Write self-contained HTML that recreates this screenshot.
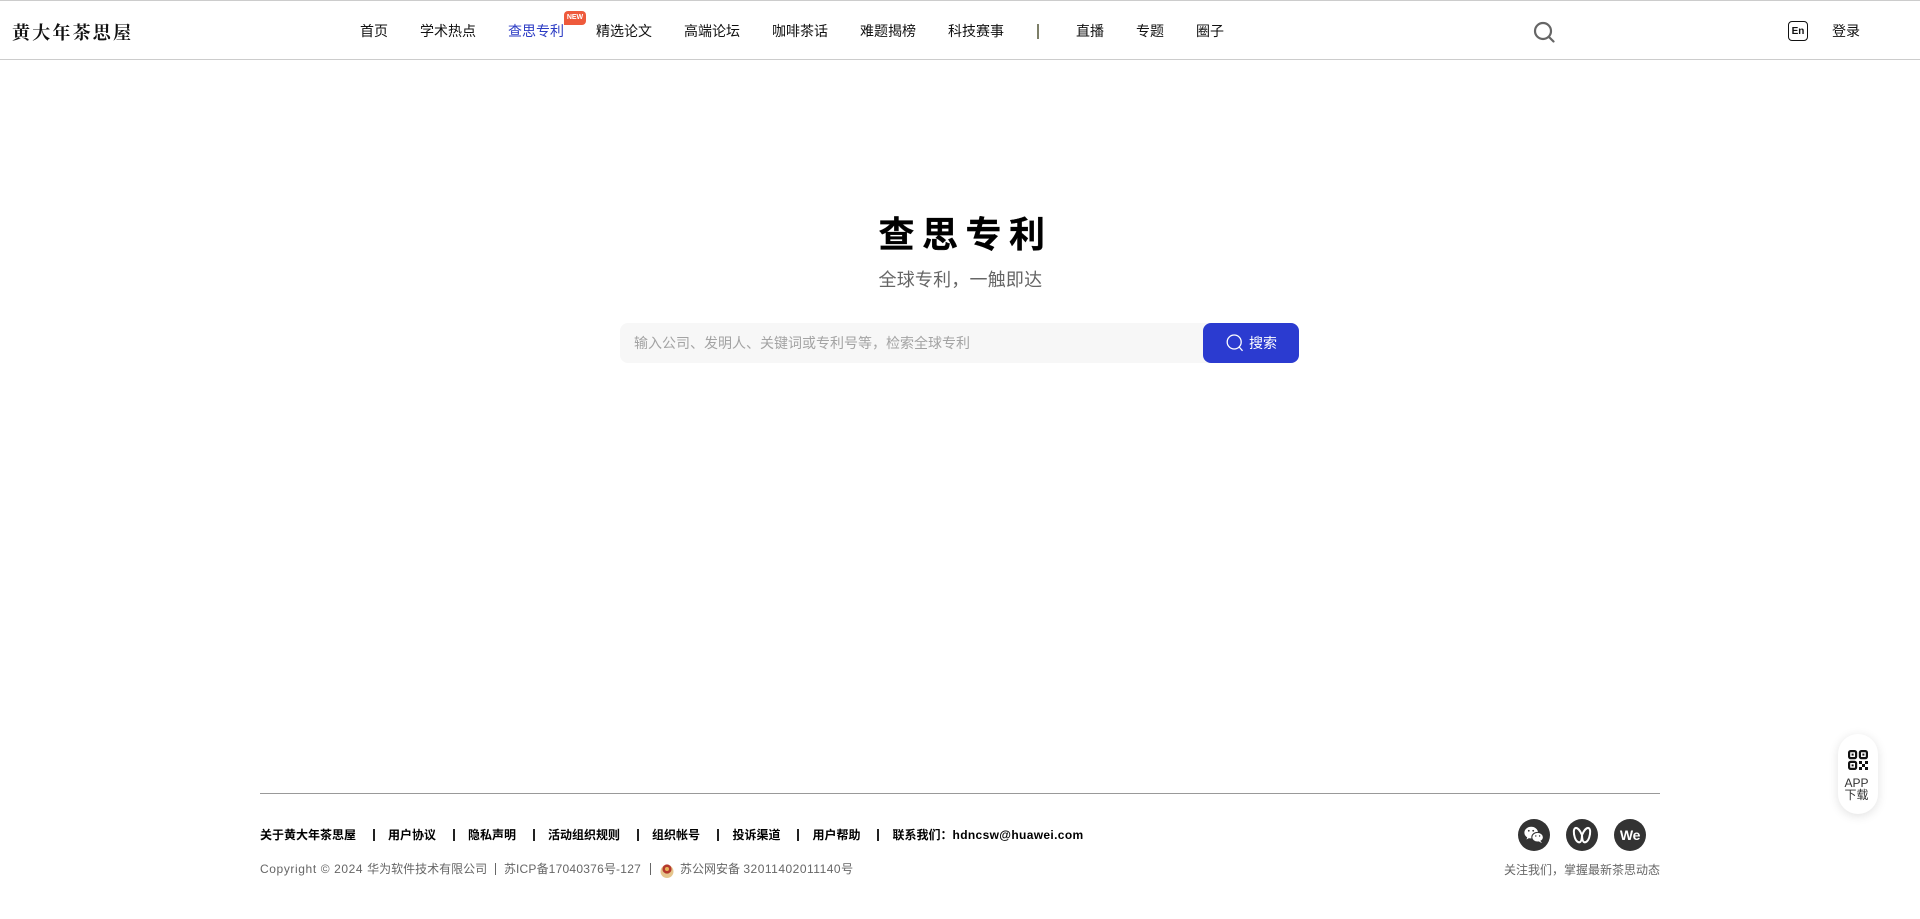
<!DOCTYPE html>
<html lang="zh-CN">
<head>
<meta charset="utf-8">
<title>查思专利</title>
<style>
html,body{margin:0;padding:0;background:#fff;}
body{position:relative;width:1920px;height:919px;overflow:hidden;font-family:"Liberation Sans","Noto Sans CJK SC",sans-serif;color:#000;}
.a{position:absolute;white-space:nowrap;}
.n{top:21px;height:20px;line-height:20px;font-size:14px;color:#111;}
.f{top:825px;height:20px;line-height:20px;font-size:12px;font-weight:700;color:#000;}
.s{top:829px;width:1.5px;height:12px;background:#222;}
.c{top:859px;height:20px;line-height:20px;font-size:12px;color:#666;}
.o{top:819px;width:32px;height:32px;border-radius:50%;background:#333;}
</style>
</head>
<body>
<div class="a" style="left:0;top:0;width:1920px;height:1px;background:#ccc"></div>
<div class="a" style="left:0;top:59px;width:1920px;height:1px;background:#ccc"></div>

<div class="a" style="left:12px;top:18px;height:30px;line-height:30px;font-size:18px;font-weight:700;letter-spacing:2.2px;font-family:'Liberation Serif','Noto Serif CJK SC',serif;color:#111">黄大年茶思屋</div>

<div class="a n" style="left:360px">首页</div>
<div class="a n" style="left:420px">学术热点</div>
<div class="a n" style="left:508px;color:#2b3bc4">查思专利</div>
<div class="a" style="left:564px;top:11px;width:22px;height:14px;background:#ee5a3c;border-radius:4px 4px 4px 0;color:#fff;font-size:7px;font-weight:700;line-height:14px;text-align:center">NEW</div>
<div class="a n" style="left:596px">精选论文</div>
<div class="a n" style="left:684px">高端论坛</div>
<div class="a n" style="left:772px">咖啡茶话</div>
<div class="a n" style="left:860px">难题揭榜</div>
<div class="a n" style="left:948px">科技赛事</div>
<div class="a" style="left:1037px;top:24px;width:2px;height:15px;background:#7d7f68"></div>
<div class="a n" style="left:1076px">直播</div>
<div class="a n" style="left:1136px">专题</div>
<div class="a n" style="left:1196px">圈子</div>

<svg class="a" style="left:1533px;top:21px" width="22" height="22" viewBox="0 0 22 22" fill="none" stroke="#666" stroke-width="2.2"><circle cx="10" cy="10" r="8"/><path d="M16 16l4.500 4.500" stroke-linecap="round"/></svg>

<div class="a" style="left:1788px;top:21px;width:18px;height:18px;border:1.2px solid #111;border-radius:4px;font-size:10px;font-weight:700;line-height:20px;text-align:center;color:#111">En</div>
<div class="a n" style="left:1832px">登录</div>

<div class="a" style="left:878.500px;top:210px;height:50px;line-height:50px;font-size:36px;font-weight:700;letter-spacing:7.500px;color:#000;-webkit-text-stroke:.3px #000">查思专利</div>
<div class="a" style="left:878.500px;top:266px;height:28px;line-height:28px;font-size:18px;letter-spacing:.2px;color:#666">全球专利，一触即达</div>

<div class="a" style="left:620px;top:323px;width:600px;height:40px;background:#f7f7f7;border-radius:8px"></div>
<div class="a" style="left:634px;top:333px;height:20px;line-height:20px;font-size:14px;color:#a3a3a3">输入公司、发明人、关键词或专利号等，检索全球专利</div>
<div class="a" style="left:1203px;top:323px;width:96px;height:40px;background:#2b3bd0;border-radius:8px"></div>
<svg class="a" style="left:1226px;top:334px" width="18" height="18" viewBox="0 0 18 18" fill="none" stroke="#fff" stroke-width="1.300"><circle cx="8.200" cy="8" r="7"/><path d="M13.200 13l3 3.400" stroke-linecap="round"/></svg>
<div class="a" style="left:1249px;top:333px;height:20px;line-height:20px;font-size:14px;color:#fff">搜索</div>

<div class="a" style="left:260px;top:793px;width:1400px;height:1px;background:#999"></div>

<div class="a f" style="left:260px">关于黄大年茶思屋</div>
<div class="a s" style="left:373px"></div>
<div class="a f" style="left:388px">用户协议</div>
<div class="a s" style="left:453px"></div>
<div class="a f" style="left:468px">隐私声明</div>
<div class="a s" style="left:533px"></div>
<div class="a f" style="left:548px">活动组织规则</div>
<div class="a s" style="left:637px"></div>
<div class="a f" style="left:652px">组织帐号</div>
<div class="a s" style="left:717px"></div>
<div class="a f" style="left:732.500px">投诉渠道</div>
<div class="a s" style="left:797px"></div>
<div class="a f" style="left:812.500px">用户帮助</div>
<div class="a s" style="left:877px"></div>
<div class="a f" style="left:892.500px">联系我们：<span style="font-size:12px;letter-spacing:.35px">hdncsw@huawei.com</span></div>

<div class="a c" style="left:260px"><span style="letter-spacing:.6px">Copyright © 2024 </span>华为软件技术有限公司</div>
<div class="a" style="left:495px;top:863px;width:1px;height:12px;background:#666"></div>
<div class="a c" style="left:504px">苏<span style="letter-spacing:.2px">ICP</span>备<span style="letter-spacing:.25px">17040376</span>号<span style="letter-spacing:.25px">-127</span></div>
<div class="a" style="left:650px;top:863px;width:1px;height:12px;background:#666"></div>
<svg class="a" style="left:660px;top:863px" width="14" height="15" viewBox="0 0 14 15"><ellipse cx="7" cy="8.500" rx="6.500" ry="6.500" fill="#e5c58c"/><circle cx="7" cy="6" r="4.600" fill="#b5392c"/><circle cx="7" cy="6" r="2" fill="#e8b35a"/></svg>
<div class="a c" style="left:680px">苏公网安备 <span style="letter-spacing:.5px">32011402011140</span>号</div>

<div class="a o" style="left:1518px"></div>
<svg class="a" style="left:1518px;top:819px" width="32" height="32" viewBox="0 0 32 32" fill="#fff"><ellipse cx="13.200" cy="13.600" rx="6.800" ry="5.800"/><path d="M9.500 17.500l-1 3 3.500-2z"/><ellipse cx="19.600" cy="18.200" rx="5.800" ry="4.800" stroke="#333" stroke-width="1"/><path d="M22.500 22l1.500 2-3.500-1.500z"/><circle cx="10.800" cy="11.800" r=".9" fill="#333"/><circle cx="15.200" cy="11.800" r=".9" fill="#333"/><circle cx="17.800" cy="17" r=".7" fill="#333"/><circle cx="21.600" cy="17" r=".7" fill="#333"/></svg>
<div class="a o" style="left:1566px"></div>
<svg class="a" style="left:1566px;top:819px" width="32" height="32" viewBox="0 0 32 32" fill="none" stroke="#fff" stroke-width="2"><path d="M16 16C14 11.500 11.500 8.500 9.600 9 7.300 9.700 7.500 14.500 8.800 18.500 10 22.300 12.500 24 14.200 23 15.500 22.200 15.900 19 16 16zM16 16C18 11.500 20.500 8.500 22.400 9 24.700 9.700 24.500 14.500 23.200 18.500 22 22.300 19.500 24 17.800 23 16.500 22.200 16.100 19 16 16z"/></svg>
<div class="a o" style="left:1614px;font-size:14px;font-weight:700;color:#fff;line-height:32px;text-align:center;letter-spacing:-.3px">We</div>
<div class="a c" style="left:1504px;top:860px">关注我们，掌握最新茶思动态</div>

<div class="a" style="left:1838px;top:734px;width:40px;height:80px;background:#fff;border-radius:20px;box-shadow:0 2px 10px rgba(0,0,0,.12)"></div>
<svg class="a" style="left:1848px;top:750px" width="20" height="20" viewBox="0 0 20 20" fill="none" stroke="#111" stroke-width="2.200"><rect x="1.100" y="1.100" width="7" height="7" rx="1.500"/><rect x="11.900" y="1.100" width="7" height="7" rx="1.500"/><rect x="1.100" y="11.900" width="7" height="7" rx="1.500"/><rect x="3.600" y="3.600" width="2" height="2" fill="#111" stroke="none"/><rect x="14.400" y="3.600" width="2" height="2" fill="#111" stroke="none"/><rect x="3.600" y="14.400" width="2" height="2" fill="#111" stroke="none"/><path d="M11 11h3v3h-3zM17 11h3v3h-3zM14 14h3v3h-3zM11 17h3v3h-3zM17 17h3v3h-3z" fill="#111" stroke="none"/></svg>
<div class="a" style="left:1844.500px;top:777px;height:12px;line-height:12px;font-size:12px;color:#333">APP</div>
<div class="a" style="left:1844.500px;top:789px;height:12px;line-height:12px;font-size:12px;color:#333">下载</div>
</body>
</html>
